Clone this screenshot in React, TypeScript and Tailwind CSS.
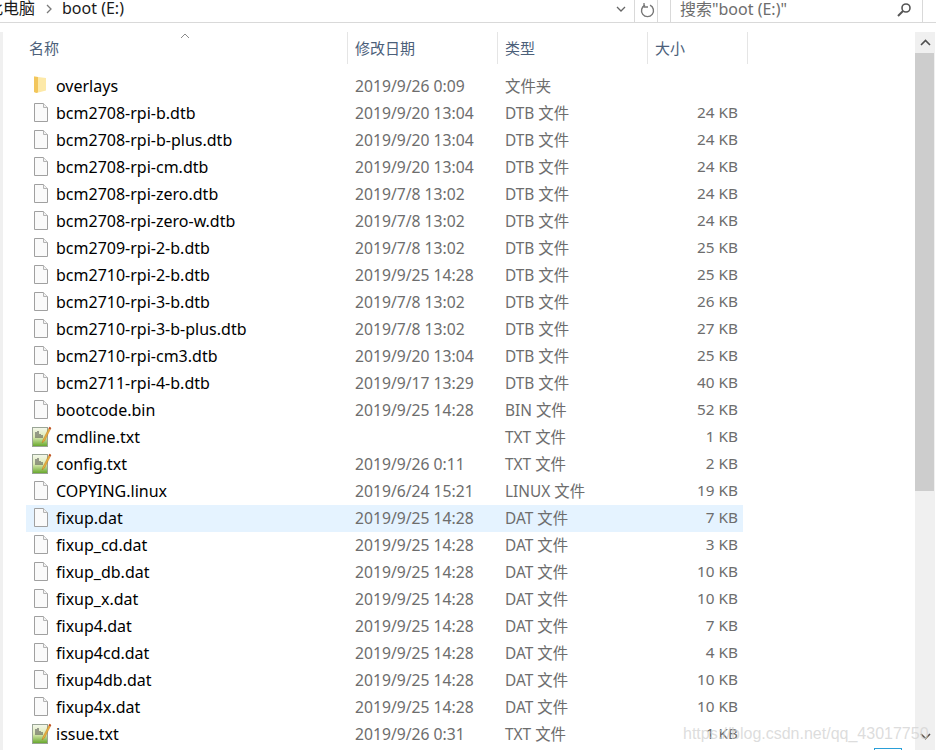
const FONT = "font-['Noto_Sans','Noto_Sans_CJK_SC',sans-serif]";

type Kind = "folder" | "file" | "txt";
type Row = [string, string, string, string, Kind];

const rows: Row[] = [
  ["overlays", "2019/9/26 0:09", "文件夹", "", "folder"],
  ["bcm2708-rpi-b.dtb", "2019/9/20 13:04", "DTB 文件", "24 KB", "file"],
  ["bcm2708-rpi-b-plus.dtb", "2019/9/20 13:04", "DTB 文件", "24 KB", "file"],
  ["bcm2708-rpi-cm.dtb", "2019/9/20 13:04", "DTB 文件", "24 KB", "file"],
  ["bcm2708-rpi-zero.dtb", "2019/7/8 13:02", "DTB 文件", "24 KB", "file"],
  ["bcm2708-rpi-zero-w.dtb", "2019/7/8 13:02", "DTB 文件", "24 KB", "file"],
  ["bcm2709-rpi-2-b.dtb", "2019/7/8 13:02", "DTB 文件", "25 KB", "file"],
  ["bcm2710-rpi-2-b.dtb", "2019/9/25 14:28", "DTB 文件", "25 KB", "file"],
  ["bcm2710-rpi-3-b.dtb", "2019/7/8 13:02", "DTB 文件", "26 KB", "file"],
  ["bcm2710-rpi-3-b-plus.dtb", "2019/7/8 13:02", "DTB 文件", "27 KB", "file"],
  ["bcm2710-rpi-cm3.dtb", "2019/9/20 13:04", "DTB 文件", "25 KB", "file"],
  ["bcm2711-rpi-4-b.dtb", "2019/9/17 13:29", "DTB 文件", "40 KB", "file"],
  ["bootcode.bin", "2019/9/25 14:28", "BIN 文件", "52 KB", "file"],
  ["cmdline.txt", "", "TXT 文件", "1 KB", "txt"],
  ["config.txt", "2019/9/26 0:11", "TXT 文件", "2 KB", "txt"],
  ["COPYING.linux", "2019/6/24 15:21", "LINUX 文件", "19 KB", "file"],
  ["fixup.dat", "2019/9/25 14:28", "DAT 文件", "7 KB", "file"],
  ["fixup_cd.dat", "2019/9/25 14:28", "DAT 文件", "3 KB", "file"],
  ["fixup_db.dat", "2019/9/25 14:28", "DAT 文件", "10 KB", "file"],
  ["fixup_x.dat", "2019/9/25 14:28", "DAT 文件", "10 KB", "file"],
  ["fixup4.dat", "2019/9/25 14:28", "DAT 文件", "7 KB", "file"],
  ["fixup4cd.dat", "2019/9/25 14:28", "DAT 文件", "4 KB", "file"],
  ["fixup4db.dat", "2019/9/25 14:28", "DAT 文件", "10 KB", "file"],
  ["fixup4x.dat", "2019/9/25 14:28", "DAT 文件", "10 KB", "file"],
  ["issue.txt", "2019/9/26 0:31", "TXT 文件", "1 KB", "txt"],
];

function FileIcon({ kind }: { kind: Kind }) {
  if (kind === "folder") {
    return (
      <svg width="20" height="20" viewBox="0 0 20 20" className="shrink-0">
        <path d="M4 0.500l12 1.500v12.500l-9.500 2.500-2.500-1z" fill="#fde9a8" />
        <path d="M4 0.500l4 0.500v15.300l-1.500 0.700-2.500-1z" fill="#f2c65c" />
      </svg>
    );
  }
  if (kind === "txt") {
    return (
      <svg width="22" height="22" viewBox="0 0 22 22" className="shrink-0">
        <defs>
          <linearGradient id="txtGreen" x1="0" y1="0" x2="0" y2="1">
            <stop offset="0" stopColor="#f4f7ec" />
            <stop offset="0.5" stopColor="#dcebb4" />
            <stop offset="1" stopColor="#63a527" />
          </linearGradient>
        </defs>
        <rect x="2.500" y="1.500" width="15" height="19" fill="url(#txtGreen)" stroke="#9aa596" />
        <path d="M6 6v6M8 5v7M10 8v4M12 9v3" stroke="#444" strokeWidth="1" />
        <path d="M19.500 1l-6.500 13-1 3 2.500-2 6.500-13z" fill="#eeb040" stroke="#b07a20" strokeWidth="0.500" />
        <path d="M19.500 1l1.500 1-0.700 1.400-1.500-1z" fill="#c0392b" />
      </svg>
    );
  }
  return (
    <svg width="20" height="20" viewBox="0 0 20 20" className="shrink-0">
      <path d="M4.500 0.500h9l4 4v14h-13z" fill="#fafafa" stroke="#a0a0a0" />
      <path d="M13.500 0.500v4h4" fill="#f2f2f2" stroke="#b4b4b4" />
    </svg>
  );
}

export default function App() {
  return (
    <div className={`relative h-[750px] w-[936px] overflow-hidden bg-white ${FONT}`}>
      {/* address bar */}
      <div className="flex h-[23px] items-start border-b border-[#d9d9d9]">
        <div className="flex h-[22px] w-[600px] items-start overflow-x-clip text-[16px] leading-[17px] text-[#1a1a1a]">
          <span className="ml-[-13px]">此电脑</span>
          <svg width="8" height="10" viewBox="0 0 8 10" className="ml-[10px] mt-[4px]">
            <path d="M2 1l4 4-4 4" fill="none" stroke="#7a7a7a" strokeWidth="1.3" />
          </svg>
          <span className="ml-[9px]">boot (E:)</span>
        </div>
        <div className="ml-[9px] flex h-[22px] w-[49px] items-center border-r border-[#d9d9d9]">
          <svg width="10" height="7" viewBox="0 0 10 7" className="ml-[7px] mb-[3px]">
            <path d="M1 1l4 4 4-4" fill="none" stroke="#666" strokeWidth="1.3" />
          </svg>
          <div className="ml-[8px] h-[22px] border-l border-[#d9d9d9] pl-[5px] pt-[2px]">
            <svg width="15" height="16" viewBox="0 0 15 16">
              <path d="M5 3.200a6 6 0 1 0 5 0" fill="none" stroke="#777" strokeWidth="1.400" />
              <path d="M4 1v4h4" fill="none" stroke="#777" strokeWidth="1.300" />
            </svg>
          </div>
        </div>
        <div className="ml-[12px] flex h-[22px] w-[253px] justify-between border-x border-[#d9d9d9] pl-[9px] pr-[10px] text-[16px] leading-[19px] text-[#6d6d6d]">
          <span>搜索"boot (E:)"</span>
          <svg width="16" height="16" viewBox="0 0 16 16" className="mt-[2px]">
            <circle cx="10" cy="6" r="4" fill="none" stroke="#555" strokeWidth="1.600" />
            <path d="M7 9l-5 5" stroke="#555" strokeWidth="2" />
          </svg>
        </div>
      </div>

      <div className="flex pt-[9px]">
        <div className="h-[718px] w-[3px] bg-[#f0f0f0]" />
        <div className="w-[912px]">
          {/* column headers */}
          <div className="relative flex h-[32px] items-center text-[15px] text-[#4c607a]">
            <div className="h-full w-[345px] border-r border-[#e5e5e5] pl-[26px] leading-[32px]">名称</div>
            <div className="h-full w-[150px] border-r border-[#e5e5e5] pl-[7px] leading-[32px]">修改日期</div>
            <div className="h-full w-[150px] border-r border-[#e5e5e5] pl-[7px] leading-[32px]">类型</div>
            <div className="h-full w-[100px] border-r border-[#e5e5e5] pl-[7px] leading-[32px]">大小</div>
            <svg width="10" height="6" viewBox="0 0 10 6" className="absolute left-[177px] top-[1px]">
              <path d="M1 5l4-4 4 4" fill="none" stroke="#8a8a8a" />
            </svg>
          </div>
          {/* file rows */}
          <div className="ml-[23px] mt-[9px] w-[717px]">
            {rows.map(([name, date, type, size, kind]) => (
              <div
                key={name}
                className={`flex h-[27px] items-center pb-[2px] text-[16px] ${name === "fixup.dat" ? "bg-[#e5f3ff]" : ""}`}
              >
                <div className="flex w-[321px] items-center">
                  <div className="ml-[4px] w-[26px]">
                    <FileIcon kind={kind} />
                  </div>
                  <span className="text-black">{name}</span>
                </div>
                <div className="mt-[2px] w-[150px] pl-[8px] text-[15.7px] text-[#6d6d6d]">{date}</div>
                <div className="mt-[2px] w-[150px] pl-[8px] text-[15.4px] text-[#6d6d6d]">{type}</div>
                <div className="w-[91px] text-right text-[15.3px] text-[#6d6d6d]">{size}</div>
              </div>
            ))}
          </div>
        </div>
        {/* scrollbar */}
        <div className="flex h-[718px] w-[20px] flex-col bg-[#f0f0f0]">
          <div className="flex h-[21px] items-center justify-center">
            <svg width="11" height="7" viewBox="0 0 11 7">
              <path d="M1 6l4.500-4.500L10 6" fill="none" stroke="#505050" strokeWidth="1.600" />
            </svg>
          </div>
          <div className="h-[438px] w-[19px] bg-[#cdcdcd]" />
          <div className="flex-1" />
          <div className="flex h-[21px] items-center justify-center pb-[6px]">
            <svg width="11" height="7" viewBox="0 0 11 7">
              <path d="M1 1l4.500 4.500L10 1" fill="none" stroke="#505050" strokeWidth="1.600" />
            </svg>
          </div>
        </div>
      </div>

      {/* page watermark */}
      <span className="absolute left-[683px] top-[722px] font-['Liberation_Sans',sans-serif] text-[16px] text-[#d4d4d4]/80">
        https://blog.csdn.net/qq_43017750
      </span>
      <div className="absolute left-[874px] top-[748px] h-[4px] w-[28px] border border-[#2a9fd8]" />
    </div>
  );
}
